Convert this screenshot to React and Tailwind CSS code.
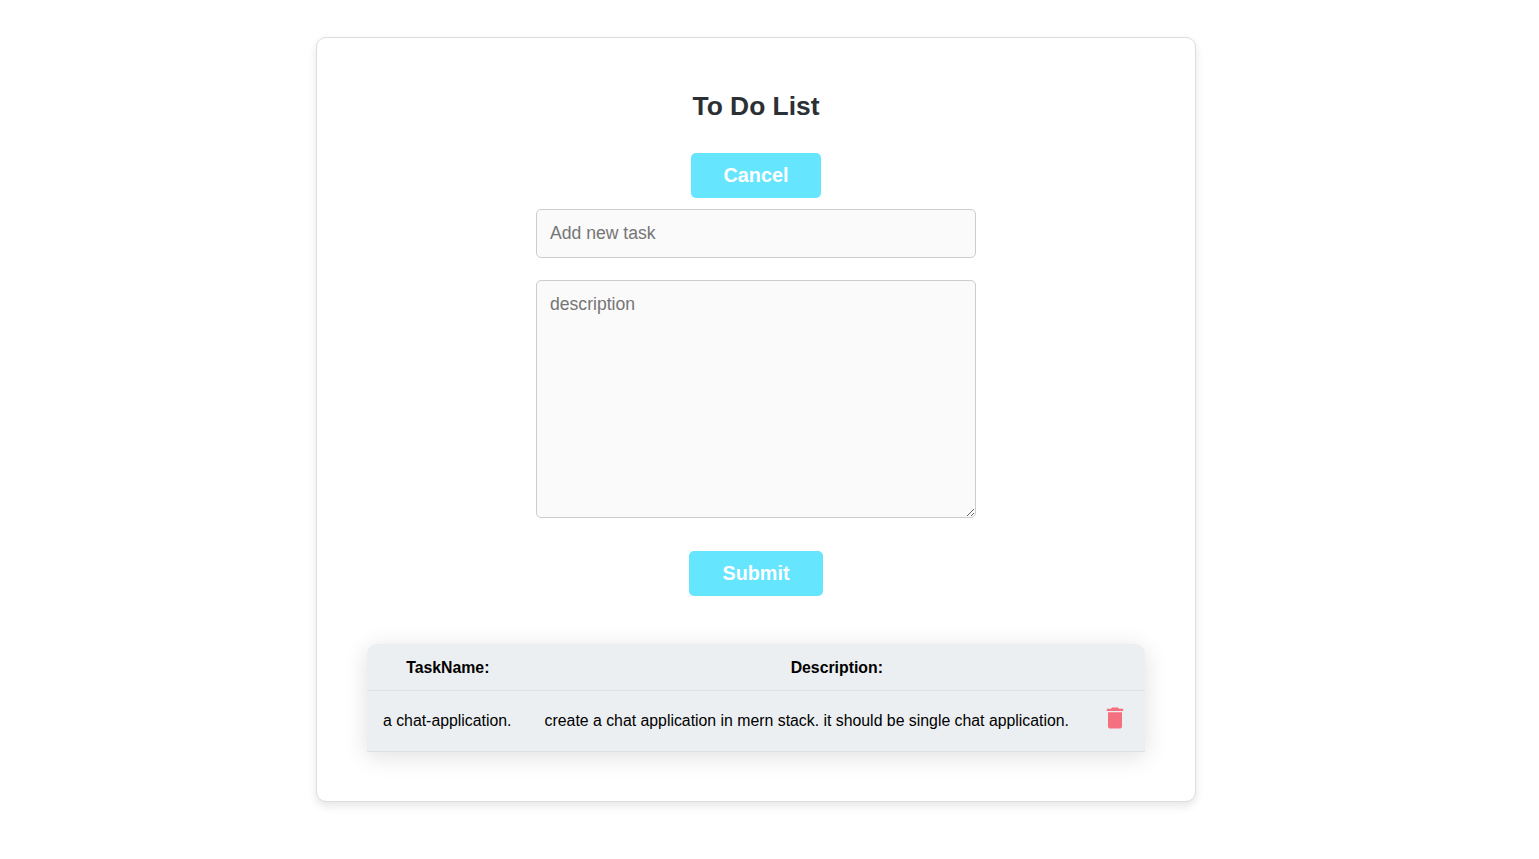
import React from "react";
import { MdDelete } from "react-icons/md";

export default function App() {
  return (
    <div className="min-h-[859px] bg-white pt-[37px] pl-[316px] font-['Liberation_Sans',Arial,sans-serif]">
      <div className="w-[880px] h-[765px] border border-[#ddd] rounded-[10px] shadow-[0_4px_8px_rgba(0,0,0,0.1)] bg-white px-[50px] pt-[53px] flex flex-col items-center">
        <h1 className="text-[26.4px] leading-[30px] font-bold text-[#2b3035] m-0 mb-[32px]">To Do List</h1>
        <button className="w-[130px] h-[45px] bg-[#66e5ff] text-white text-[19.8px] font-bold rounded-[5px] mb-[11px]">Cancel</button>
        <input
          placeholder="Add new task"
          className="w-[440px] h-[49px] border border-[#ccc] rounded-[5px] bg-[#fafafa] px-[13px] text-[17.6px] text-black placeholder:text-[#757575] outline-none mb-[22px]"
        />
        <textarea
          placeholder="description"
          className="block w-[440px] h-[238px] border border-[#ccc] rounded-[5px] bg-[#fafafa] px-[13px] pt-[13px] pb-[12px] text-[17.6px] leading-[20px] text-black placeholder:text-[#757575] outline-none mb-[33px]"
        />
        <button className="w-[134px] h-[45px] bg-[#66e5ff] text-white text-[19.8px] font-bold rounded-[5px] mb-[48px]">Submit</button>
        <div className="w-[778px] rounded-t-[10px] shadow-[0_4px_24px_rgba(0,0,0,0.13)] bg-[#eceff2] overflow-hidden">
          <table className="w-full border-collapse text-[15.84px] text-black">
            <thead>
              <tr className="border-b border-[#dee2e6]">
                <th className="w-[162px] h-[46px] px-4 pt-[2px] font-bold text-center">TaskName:</th>
                <th colSpan={2} className="h-[46px] px-4 pt-[2px] font-bold text-center">Description:</th>
              </tr>
            </thead>
            <tbody>
              <tr className="border-b border-[#dee2e6]">
                <td className="h-[61px] px-4 whitespace-nowrap">a chat-application.</td>
                <td className="h-[61px] px-4 whitespace-nowrap">create a chat application in mern stack. it should be single chat application.</td>
                <td className="w-[60px] h-[61px] px-4">
                  <MdDelete className="text-[#f4707e] text-[28px] -translate-y-[3px]" />
                </td>
              </tr>
            </tbody>
          </table>
        </div>
      </div>
    </div>
  );
}
